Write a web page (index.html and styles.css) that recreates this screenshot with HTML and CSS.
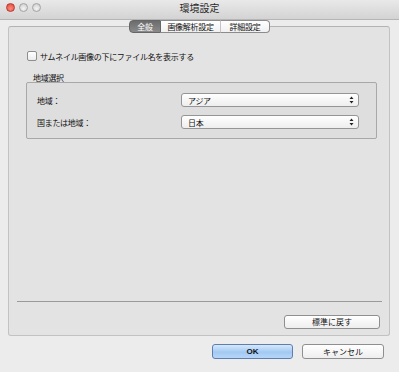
FILE: index.html
```html
<!DOCTYPE html>
<html lang="ja">
<head>
    <meta charset="UTF-8">
    <title>環境設定</title>
    <link rel="stylesheet" href="styles.css">
</head>
<body>
    <div class="window">
        <div class="titlebar">
            <div class="lights">
                <span class="light red"></span>
                <span class="light"></span>
                <span class="light"></span>
            </div>
            <div class="title">環境設定</div>
        </div>

        <div class="tabs">
            <div class="tab tab-general active">全般</div>
            <div class="tab tab-image">画像解析設定</div>
            <div class="tab tab-detail">詳細設定</div>
        </div>

        <div class="panel">
            <label class="check-row">
                <span class="checkbox"></span>
                <span>サムネイル画像の下にファイル名を表示する</span>
            </label>

            <div class="group-label">地域選択</div>
            <div class="group">
                <div class="field">
                    <span class="field-label">地域：</span>
                    <div class="popup">
                        <span>アジア</span>
                        <svg class="arrows" width="5" height="8" viewBox="0 0 5 8"><path d="M2.5 0.5 L4.5 3 L0.5 3 Z M2.5 7.5 L4.5 5 L0.5 5 Z" fill="#222"/></svg>
                    </div>
                </div>
                <div class="field">
                    <span class="field-label">国または地域：</span>
                    <div class="popup">
                        <span>日本</span>
                        <svg class="arrows" width="5" height="8" viewBox="0 0 5 8"><path d="M2.5 0.5 L4.5 3 L0.5 3 Z M2.5 7.5 L4.5 5 L0.5 5 Z" fill="#222"/></svg>
                    </div>
                </div>
            </div>

            <div class="panel-bottom">
                <div class="separator"></div>
                <div class="reset-row">
                    <button class="btn reset">標準に戻す</button>
                </div>
            </div>
        </div>

        <div class="footer">
            <button class="btn ok">OK</button>
            <button class="btn cancel">キャンセル</button>
        </div>
    </div>
</body>
</html>
```

FILE: styles.css
```css
* { box-sizing: border-box; }
body { margin: 0; background-color: #ffffff; font-family: "Noto Sans CJK JP", "Noto Sans", sans-serif; color: #111; font-size: 8px; letter-spacing: -0.3px; }

.window { width: 399px; height: 372px; background-color: #ececec; display: flex; flex-direction: column; overflow: hidden; }

.titlebar { height: 20px; flex-shrink: 0; background: linear-gradient(#e9e9e9, #d3d3d3); border-bottom: 1px solid #b5b5b5; display: flex; align-items: center; justify-content: center; position: relative; }
.title { font-size: 10px; color: #2a2a2a; line-height: 10px; margin-top: -3px; letter-spacing: 0; }
.lights { position: absolute; left: 6px; top: 3px; display: flex; gap: 4px; }
.light { width: 9px; height: 9px; border-radius: 50%; background: radial-gradient(circle at 50% 65%, #f4f4f4, #c8c8c8); border: 1px solid #a4a4a4; }
.light.red { background: radial-gradient(circle at 50% 65%, #ff8a7a, #e0443a); border-color: #b8382f; }

.tabs { display: flex; justify-content: center; height: 13px; position: relative; z-index: 1; }
.tab { height: 13px; line-height: 11px; text-align: center; background: linear-gradient(#ffffff, #f1f1f1); border: 1px solid #8c8c8c; border-left: none; color: #111; }
.tab-general { width: 32px; border-left: 1px solid #8c8c8c; border-radius: 4px 0 0 4px; }
.tab-image { width: 60px; border-right-color: #c4c4c4; }
.tab-detail { width: 49px; border-radius: 0 4px 4px 0; }
.tab.active { background: linear-gradient(#6c6c6c, #8a8a8a); color: #ffffff; border-color: #666; }

.panel { height: 310px; margin: -7px 9px 0 8px; flex-shrink: 0; background-color: #e3e3e3; border: 1px solid #c2c2c2; border-top-color: #b3b3b3; border-radius: 3px; padding-top: 23px; display: flex; flex-direction: column; }

.check-row { display: flex; align-items: center; height: 12px; margin-left: 18px; gap: 3px; }
.checkbox { width: 10px; height: 10px; border: 1px solid #8e8e8e; border-radius: 2px; background: linear-gradient(#ffffff, #ececec); }

.group-label { margin: 12px 0 0 24px; line-height: 8px; height: 8px; }
.group { margin-left: 17px; width: 351px; border: 1px solid #a8a8a8; border-radius: 2px; background-color: #dedede; padding: 10px 17px 9px 10px; display: flex; flex-direction: column; gap: 8px; }
.field { display: flex; align-items: center; height: 14px; }
.field-label { width: 144px; }
.popup { width: 178px; height: 14px; border: 1px solid #959595; border-radius: 3px; background: linear-gradient(#ffffff, #eeeeee); display: flex; align-items: center; justify-content: space-between; padding: 0 4px 0 6px; }
.arrows { display: block; }

.panel-bottom { margin-top: auto; padding-bottom: 6px; }
.separator { height: 1px; background-color: #9a9a9a; margin: 0 7px 0 8px; }
.reset-row { display: flex; justify-content: flex-end; margin-top: 13px; padding-right: 9px; }

.btn { font-family: "Noto Sans CJK JP", "Noto Sans", sans-serif; font-size: 8px; color: #111; height: 14px; padding: 0; border: 1px solid #8f8f8f; border-radius: 3px; background: linear-gradient(#ffffff, #eeeeee); line-height: 12px; }
.reset { width: 96px; }

.footer { display: flex; justify-content: flex-end; gap: 9px; margin-top: 8px; padding-right: 15px; }
.footer .btn { height: 15px; }
.ok { width: 81px; background: linear-gradient(#d6e8fc, #a2c9f3 55%, #b7d6f8); border-color: #5e7fae; font-family: "Liberation Sans", sans-serif; font-weight: bold; }
.cancel { width: 82px; }
```
